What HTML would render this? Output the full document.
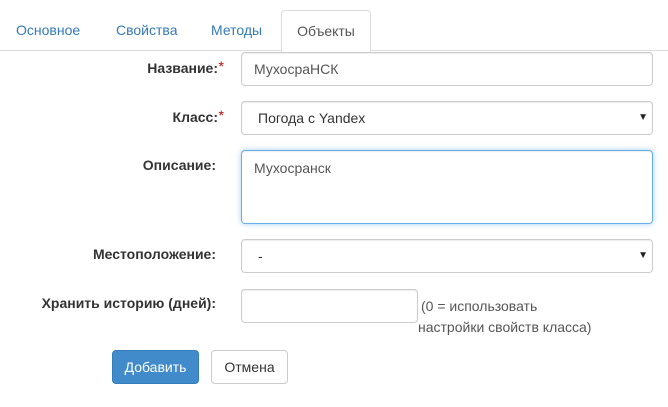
<!DOCTYPE html>
<html><head><meta charset="utf-8"><style>
*{box-sizing:border-box}
body{margin:0;width:668px;height:407px;background:#fff;font-family:"Liberation Sans",Arial,sans-serif;font-size:14px;color:#333;position:relative;overflow:hidden}
.a{position:absolute}
.tab{position:absolute;top:10px;height:41px;line-height:41px;color:#337ab7}
.line{position:absolute;left:0;top:50px;width:668px;height:1px;background:#ddd}
.act{position:absolute;left:281px;top:10px;width:90px;height:42px;border:1px solid #ddd;border-bottom:none;border-radius:4px 4px 0 0;background:#fff;color:#555;text-align:center;line-height:40px}
.lbl{position:absolute;font-weight:bold;text-align:right;right:452px;white-space:nowrap}
.lbl i{color:#c00;font-style:normal;font-weight:normal;position:absolute;right:-6px;top:-2px}
.in{position:absolute;left:241px;width:412px;border:1px solid #ccc;border-radius:4px;padding-left:13px;color:#555;box-shadow:inset 0 1px 1px rgba(0,0,0,.075)}
.arr{position:absolute;right:4px;font-size:10px;color:#222}
.btn{position:absolute;top:350px;height:34px;border-radius:4px;line-height:32px;text-align:center}
</style></head><body>
<div class="tab" style="left:16px">Основное</div>
<div class="tab" style="left:116px">Свойства</div>
<div class="tab" style="left:211px">Методы</div>
<div class="line"></div>
<div class="act">Объекты</div>

<div class="lbl" style="top:60px;right:450px">Название:<i>*</i></div>
<div class="in" style="top:52px;height:34px;line-height:32px;padding-left:12px">МухосраНСК</div>

<div class="lbl" style="top:109px;right:450px">Класс:<i>*</i></div>
<div class="in" style="top:101px;height:34px;line-height:32px;padding-left:16px;color:#333">Погода с Yandex<span class="arr">▼</span></div>

<div class="lbl" style="top:157px">Описание:</div>
<div class="in" style="top:150px;height:74px;line-height:18px;padding-top:8px;padding-left:12px;border-color:#66afe9;box-shadow:inset 0 1px 1px rgba(0,0,0,.075),0 0 6px rgba(102,175,233,.6)">Мухосранск</div>

<div class="lbl" style="top:246px">Местоположение:</div>
<div class="in" style="top:239px;height:34px;line-height:32px;padding-left:16px;color:#333">-<span class="arr">▼</span></div>

<div class="lbl" style="top:295px">Хранить историю (дней):</div>
<div class="in" style="top:289px;width:177px;height:34px"></div>
<div class="a" style="left:421px;top:296px;line-height:21px;color:#555">(0 = использовать<br><span style="margin-left:-3px">настройки свойств класса)</span></div>

<div class="btn" style="left:112px;width:87px;background:#428bca;border:1px solid #357ebd;color:#fff">Добавить</div>
<div class="btn" style="left:211px;width:77px;background:#fff;border:1px solid #ccc;color:#333">Отмена</div>
</body></html>
